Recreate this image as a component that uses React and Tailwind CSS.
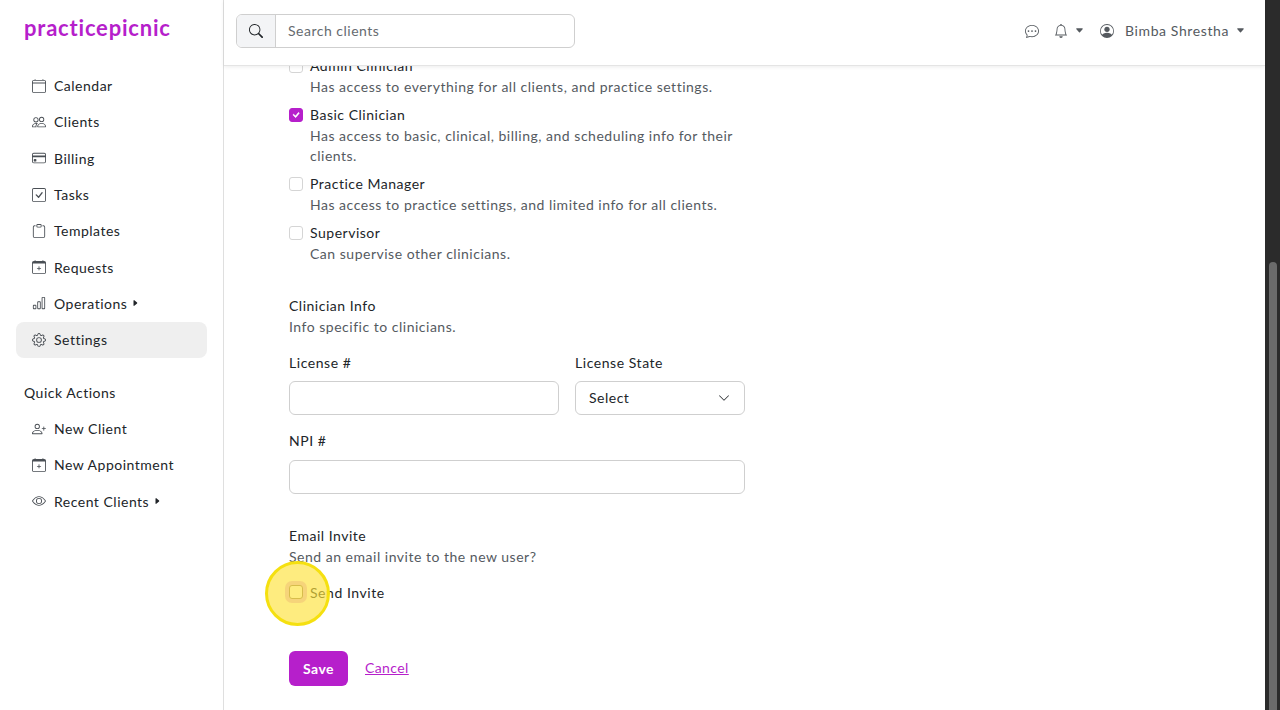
import {
  BsCalendar4, BsPeople, BsCreditCard, BsCheckSquare, BsClipboard, BsCalendarPlus, BsBarChart, BsGear,
  BsPersonPlus, BsEye, BsSearch, BsChatDots, BsBell, BsPersonCircle, BsCaretRightFill, BsCaretDownFill,
  BsChevronDown, BsCheck,
} from 'react-icons/bs';

const font = "font-['Lato','Noto_Sans',sans-serif]";

const navItems = [
  { label: 'Calendar', icon: BsCalendar4 },
  { label: 'Clients', icon: BsPeople },
  { label: 'Billing', icon: BsCreditCard },
  { label: 'Tasks', icon: BsCheckSquare },
  { label: 'Templates', icon: BsClipboard },
  { label: 'Requests', icon: BsCalendarPlus },
  { label: 'Operations', icon: BsBarChart, caret: true },
  { label: 'Settings', icon: BsGear, active: true },
];

const quickActions = [
  { label: 'New Client', icon: BsPersonPlus },
  { label: 'New Appointment', icon: BsCalendarPlus },
  { label: 'Recent Clients', icon: BsEye, caret: true },
];

const roles = [
  { label: 'Admin Clinician', desc: 'Has access to everything for all clients, and practice settings.' },
  { label: 'Basic Clinician', desc: 'Has access to basic, clinical, billing, and scheduling info for their clients.', checked: true },
  { label: 'Practice Manager', desc: 'Has access to practice settings, and limited info for all clients.' },
  { label: 'Supervisor', desc: 'Can supervise other clinicians.' },
];

function NavRow({ item }) {
  const Icon = item.icon;
  return (
    <div className={`flex items-center h-[36.3px] pl-[16px] rounded-lg text-[14px] tracking-[0.5px] text-[#212529] ${item.active ? 'bg-[#efefef]' : ''}`}>
      <Icon className="w-[14px] h-[14px] mr-[8px] text-[#4a4f55]" />
      <span>{item.label}</span>
      {item.caret && <BsCaretRightFill className="w-[8px] h-[8px] ml-[4px] text-[#212529]" />}
    </div>
  );
}

function Checkbox({ checked, focused }) {
  return (
    <span className={`flex items-center justify-center w-[14px] h-[14px] rounded-[3px] border shrink-0 ${checked ? 'bg-[#b61fcb] border-[#b61fcb]' : 'bg-white'} ${focused ? 'shadow-[0_0_0_4px_rgba(182,31,203,0.3)] border-[#8f7a6a]' : ''} ${!checked && !focused ? 'border-[#d5d5d5]' : ''}`}>
      {checked && <BsCheck className="w-[14px] h-[14px] text-white stroke-[0.8]" />}
    </span>
  );
}

function Role({ role }) {
  return (
    <div className="flex gap-[7px] mb-[8px]">
      <div className="h-[20px] flex items-center"><Checkbox checked={role.checked} /></div>
      <div>
        <div className="h-[20px] leading-[20px] text-[14px] tracking-[0.51px] text-[#212529]">{role.label}</div>
        <div className="mt-[1px] leading-[20px] text-[14px] tracking-[0.51px] text-[#555a5f]">{role.desc}</div>
      </div>
    </div>
  );
}

function Field({ label, className, gap, children }) {
  return (
    <div className={className}>
      <div className={`h-[20px] leading-[20px] text-[14px] tracking-[0.55px] text-[#212529] ${gap}`}>{label}</div>
      {children}
    </div>
  );
}

export default function App() {
  return (
    <div className={`flex w-[1280px] h-[710px] overflow-hidden bg-white ${font}`}>
      {/* Sidebar */}
      <aside className="w-[224px] shrink-0 border-r border-[#dfdfdf] px-[16px]">
        <div className="pt-[14px] pl-[8px] h-[67.5px] text-[22px] leading-[28px] font-bold tracking-[0.8px] text-[#b61fcb]">practicepicnic</div>
        {navItems.map((item) => <NavRow key={item.label} item={item} />)}
        <div className="mt-[25.5px] mb-[7px] pl-[8px] h-[20px] leading-[20px] text-[14px] tracking-[0.5px] text-[#212529]">Quick Actions</div>
        {quickActions.map((item) => <NavRow key={item.label} item={item} />)}
      </aside>

      <div className="w-[1041px] shrink-0 flex flex-col">
        {/* Header */}
        <header className="relative z-10 h-[66px] shrink-0 bg-white border-b border-[#e4e4e4] shadow-[0_1px_4px_rgba(0,0,0,0.08)] flex items-center pl-[12px] pr-[20px] pb-[4px]">
          <div className="flex w-[339px] h-[34px] border border-[#cfcfcf] rounded-md overflow-hidden">
            <div className="w-[39px] bg-[#f3f4f6] border-r border-[#cfcfcf] flex items-center justify-center">
              <BsSearch className="w-[14px] h-[14px] text-[#212529]" />
            </div>
            <div className="flex-1 pl-[12px] text-[14px] tracking-[0.5px] leading-[32px] text-[#666b70]">Search clients</div>
          </div>
          <div className="ml-auto flex items-center text-[#555a5f]">
            <BsChatDots className="w-[14px] h-[14px]" />
            <BsBell className="w-[14px] h-[14px] ml-[15px]" />
            <BsCaretDownFill className="w-[9px] h-[9px] ml-[7px]" />
            <BsPersonCircle className="w-[14px] h-[14px] ml-[16px]" />
            <span className="ml-[11px] text-[14px] tracking-[0.6px]">Bimba Shrestha</span>
            <BsCaretDownFill className="w-[9px] h-[9px] ml-[7px]" />
          </div>
        </header>

        {/* Form */}
        <main className="relative flex-1 overflow-hidden pl-[65px]">
          <div className="w-[456px] mt-[-10px]">
            {roles.map((role) => <Role key={role.label} role={role} />)}

            <div className="mt-[32px] leading-[20px] text-[14px] tracking-[0.51px] text-[#212529]">Clinician Info</div>
            <div className="mt-[1px] leading-[20px] text-[14px] tracking-[0.51px] text-[#555a5f]">Info specific to clinicians.</div>

            <div className="flex gap-[16px] mt-[16px]">
              <Field label="License #" className="w-[270px]" gap="mb-[8px]">
                <div className="h-[34px] border border-[#cfcfcf] rounded-md" />
              </Field>
              <Field label="License State" className="w-[170px]" gap="mb-[8px]">
                <div className="h-[34px] border border-[#cfcfcf] rounded-md flex items-center justify-between pl-[13px] pr-[14px] pb-[1px] text-[14px] tracking-[0.5px] text-[#212529]">
                  Select
                  <BsChevronDown className="w-[12px] h-[12px]" />
                </div>
              </Field>
            </div>

            <Field label="NPI #" className="mt-[16px]" gap="mb-[9px]">
              <div className="h-[34px] border border-[#cfcfcf] rounded-md" />
            </Field>

            <div className="mt-[32px] leading-[20px] text-[14px] tracking-[0.51px] text-[#212529]">Email Invite</div>
            <div className="mt-[1px] leading-[20px] text-[14px] tracking-[0.51px] text-[#555a5f]">Send an email invite to the new user?</div>

            <div className="flex items-center gap-[7px] mt-[15px] h-[20px]">
              <Checkbox focused />
              <span className="text-[14px] tracking-[0.55px] text-[#212529]">Send Invite</span>
            </div>

            <div className="flex items-center mt-[49px]">
              <button className="w-[59px] h-[35px] rounded-md bg-[#b61fcb] text-white text-[14px] font-bold tracking-[0.4px]">Save</button>
              <a className="ml-[17px] mb-[2px] text-[14px] tracking-[0.4px] text-[#b61fcb] underline">Cancel</a>
            </div>
          </div>

          {/* click highlight */}
          <div className="absolute left-[41px] top-[495px] w-[65px] h-[65px] rounded-full border-[3px] border-[#f5e010] bg-[#fde23a]/65" />
        </main>
      </div>

      {/* Scrollbar */}
      <div className="w-[15px] shrink-0 bg-[#2b2b2b] flex flex-col justify-end items-center">
        <div className="w-[8px] h-[448px] rounded-t-full bg-[#6b6b6b]" />
      </div>
    </div>
  );
}
